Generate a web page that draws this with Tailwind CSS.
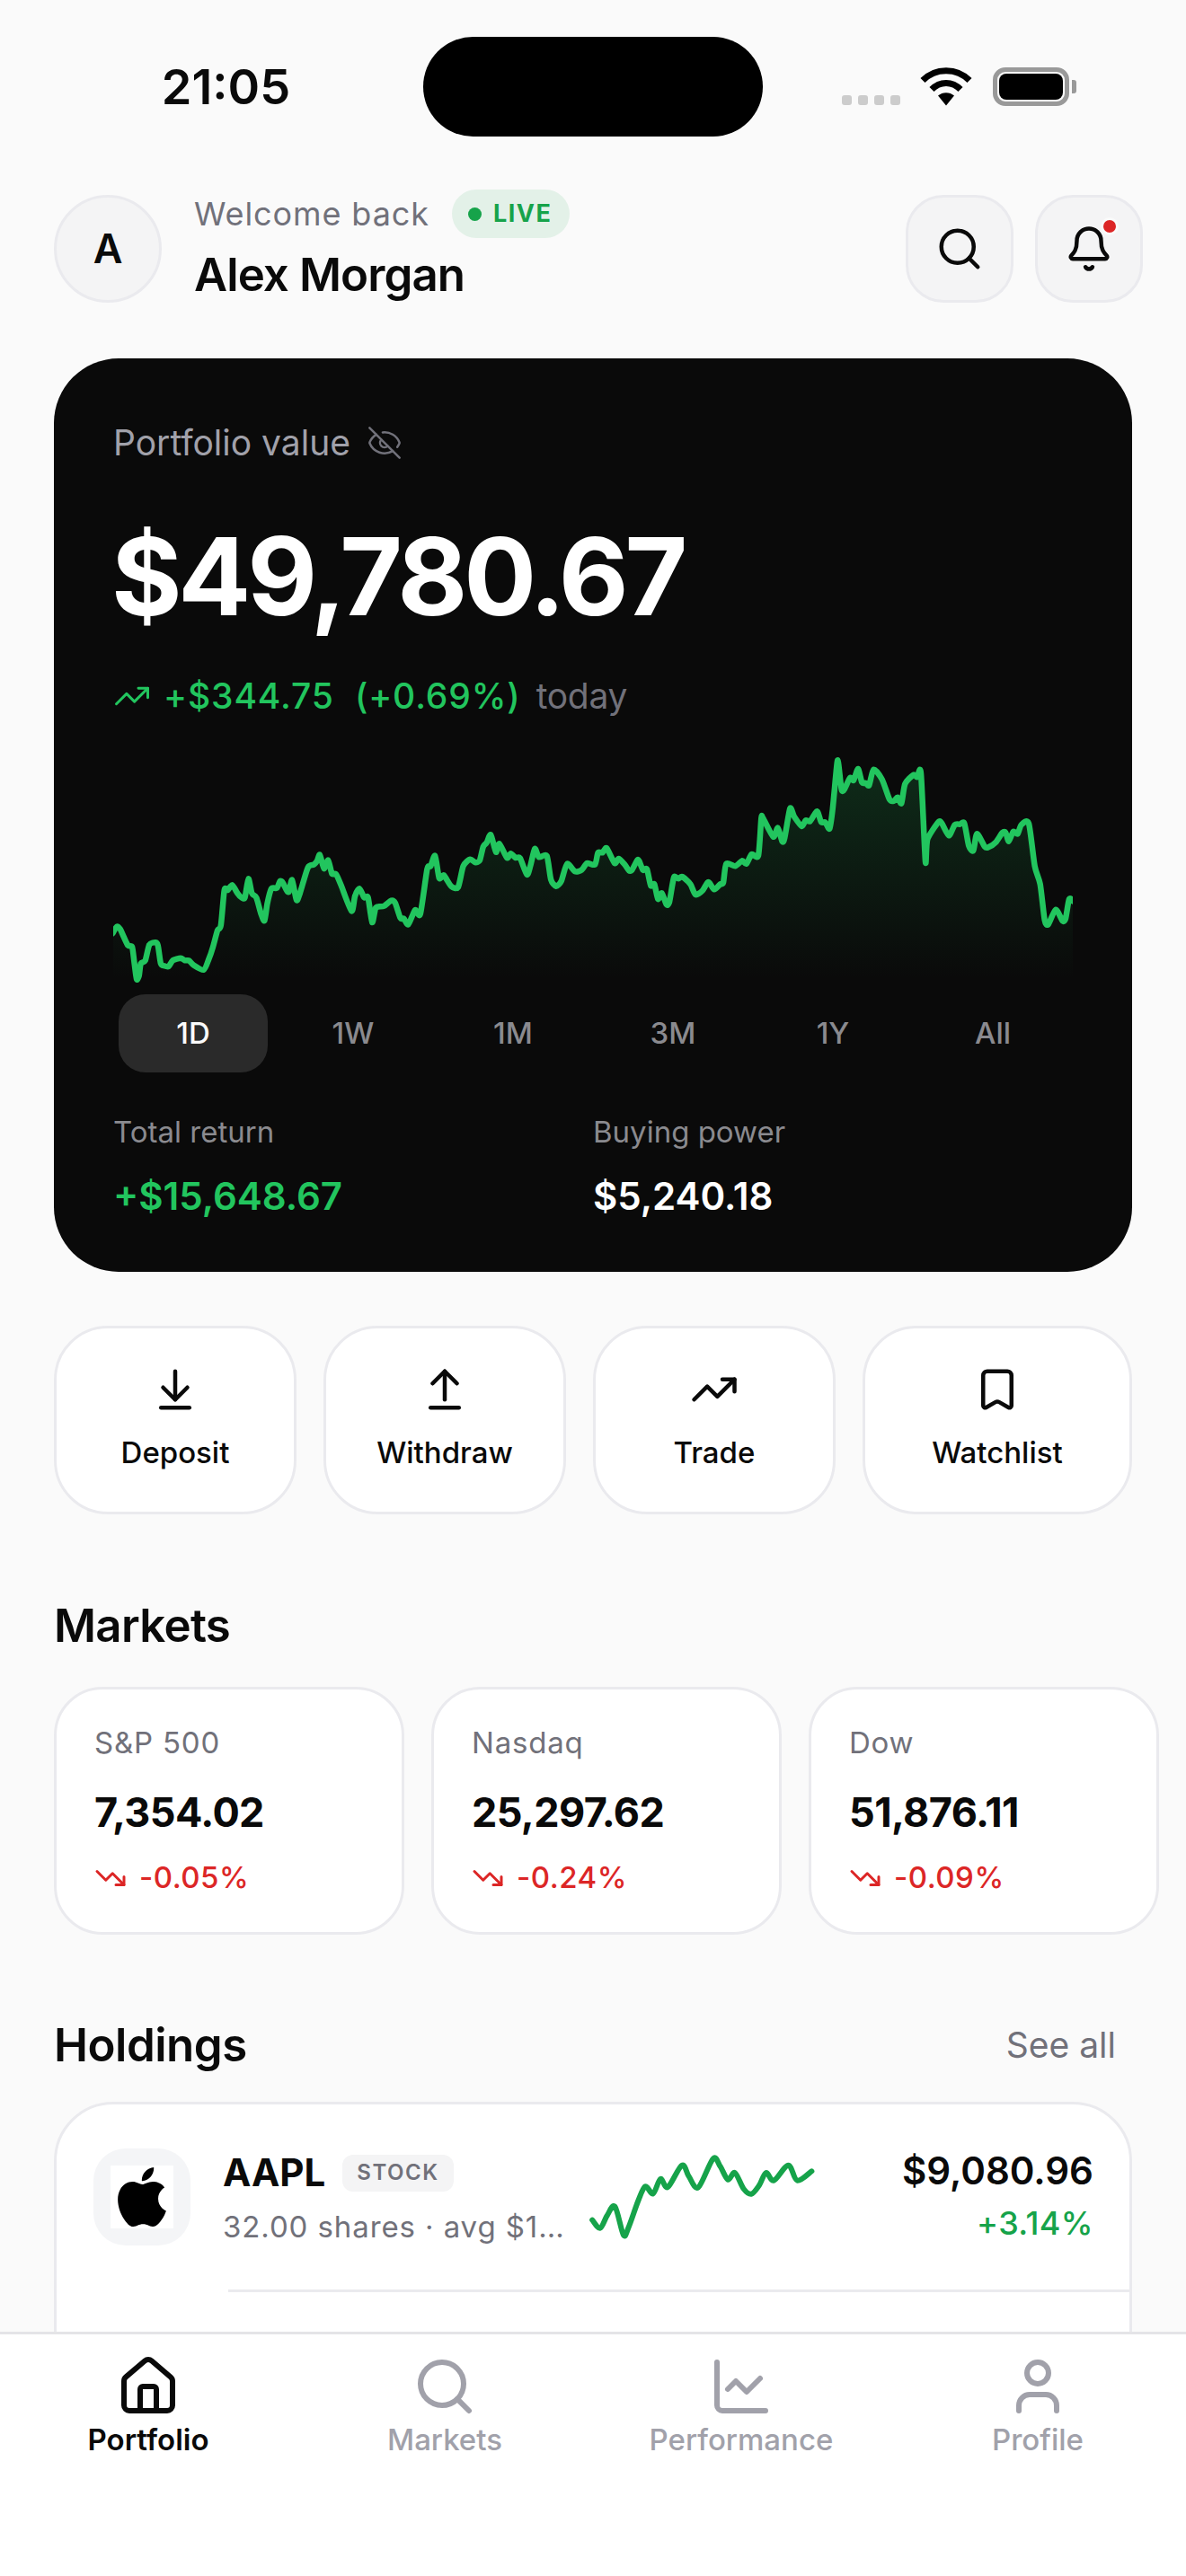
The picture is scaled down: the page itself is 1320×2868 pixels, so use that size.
<!DOCTYPE html>
<html lang="en">
<head>
    <meta charset="UTF-8">
    <meta name="viewport" content="width=device-width, initial-scale=1.0">
    <script src="https://cdn.jsdelivr.net/npm/@tailwindcss/browser@4"></script>
    <title>Portfolio</title>
</head>
<body class="w-[1320px] h-[2868px] overflow-hidden flex flex-col bg-[#fafafa] text-[#0a0a0a] font-[Inter,sans-serif]">

    <!-- Status bar -->
    <div class="shrink-0 flex h-[152px] pt-[41px]">
        <div class="w-[471px] flex justify-center pl-[32px] h-[111px] items-center">
            <span class="text-[54px] leading-[60px] font-semibold">21:05</span>
        </div>
        <div class="w-[378px] h-[111px] rounded-full bg-black"></div>
        <div class="flex h-[111px] pt-[34px] pl-[88px]">
            <div class="flex gap-[7px] pt-[31px]">
                <div class="w-[11px] h-[11px] rounded-[3px] bg-[#cccccc]"></div>
                <div class="w-[11px] h-[11px] rounded-[3px] bg-[#cccccc]"></div>
                <div class="w-[11px] h-[11px] rounded-[3px] bg-[#cccccc]"></div>
                <div class="w-[11px] h-[11px] rounded-[3px] bg-[#cccccc]"></div>
            </div>
            <svg class="ml-[22px]" width="58" height="43" viewBox="0 0 58 43" fill="none" stroke="#000" stroke-width="7">
                <path d="M3 14.500C17 0 41 0 55 14.500"/>
                <path d="M13 24.500C22 15 36 15 45 24.500"/>
                <path fill="#000" stroke="none" d="M20 31.500C25 27 33 27 38 31.500L29 42.500Z"/>
            </svg>
            <div class="ml-[23px] w-[85px] h-[43px] rounded-[14px] border-[5px] border-[#999999] p-[2px]">
                <div class="w-full h-full rounded-[8px] bg-black"></div>
            </div>
            <div class="ml-[3px] mt-[14px] w-[5px] h-[15px] rounded-r-[3px] bg-[#999999]"></div>
        </div>
    </div>

    <!-- Scrolling content -->
    <main class="flex-1 min-h-0 overflow-hidden">
        <header class="ml-[60px] w-[1212px] mt-[65px] h-[120px] flex items-center justify-between">
            <div class="flex items-center gap-[36px]">
                <div class="w-[120px] h-[120px] rounded-full border-[3px] border-[#eaeaee] bg-[#f4f4f5] flex items-center justify-center text-[45px] leading-[54px] font-semibold">A</div>
                <div>
                    <div class="flex items-center gap-[25px] h-[54px]">
                        <span class="text-[36px] leading-[54px] text-[#71717a] tracking-[0.9px]">Welcome back</span>
                        <span class="h-[54px] rounded-full bg-[#e3f1e8] flex items-center pl-[18px] pr-[20px] gap-[13px] text-[#16a34a] text-[27px] leading-[54px] font-bold tracking-[1.5px]">
                            <span class="w-[15px] h-[15px] rounded-full bg-[#16a34a]"></span>LIVE
                        </span>
                    </div>
                    <div class="mt-[4px] text-[51px] leading-[74px] font-semibold tracking-[-0.9px]">Alex Morgan</div>
                </div>
            </div>
            <div class="flex gap-[24px]">
                <div class="w-[120px] h-[120px] rounded-[42px] border-[3px] border-[#eaeaee] bg-[#f4f4f5] flex items-center justify-center">
                    <svg width="54" height="54" viewBox="0 0 24 24" fill="none" stroke="#0a0a0a" stroke-width="2" stroke-linecap="round" stroke-linejoin="round">
                        <path d="m21 21-4.340-4.340"/><circle cx="11" cy="11" r="8"/>
                    </svg>
                </div>
                <div class="relative w-[120px] h-[120px] rounded-[42px] border-[3px] border-[#eaeaee] bg-[#f4f4f5] flex items-center justify-center">
                    <svg width="54" height="54" viewBox="0 0 24 24" fill="none" stroke="#0a0a0a" stroke-width="2" stroke-linecap="round" stroke-linejoin="round">
                        <path d="M10.268 21a2 2 0 0 0 3.464 0"/>
                        <path d="M3.262 15.326A1 1 0 0 0 4 17h16a1 1 0 0 0 .740-1.673C19.410 13.956 18 12.499 18 8A6 6 0 0 0 6 8c0 4.499-1.411 5.956-2.738 7.326"/>
                    </svg>
                    <span class="absolute left-[70px] top-[22px] w-[20px] h-[20px] rounded-full bg-[#dc2626] border-[3px] border-[#fafafa]"></span>
                </div>
            </div>
        </header>

        <!-- Portfolio card -->
        <section class="ml-[60px] w-[1200px] mt-[62px] rounded-[72px] bg-[#0a0a0a] px-[66px] pt-[70px] pb-[54px]">
            <div class="flex items-center gap-[18px] h-[48px]">
                <span class="text-[39px] leading-[48px] text-[#a1a1aa]">Portfolio value</span>
                <svg width="40" height="40" viewBox="0 0 24 24" fill="none" stroke="#71717a" stroke-width="1.500" stroke-linecap="round" stroke-linejoin="round">
                    <path d="M10.733 5.076a10.744 10.744 0 0 1 11.205 6.575 1 1 0 0 1 0 .696 10.747 10.747 0 0 1-1.444 2.490"/>
                    <path d="M14.084 14.158a3 3 0 0 1-4.242-4.242"/>
                    <path d="M17.479 17.499a10.750 10.750 0 0 1-15.417-5.151 1 1 0 0 1 0-.696 10.750 10.750 0 0 1 4.446-5.143"/>
                    <path d="m2 2 20 20"/>
                </svg>
            </div>
            <div class="mt-[53px] -ml-[2px] text-[120px] leading-[144px] font-bold text-white tracking-[-4.2px]">$49,780.67</div>
            <div class="mt-[37px] flex items-center h-[48px]">
                <svg width="42" height="42" viewBox="0 0 24 24" fill="none" stroke="#22c55e" stroke-width="1.700" stroke-linecap="round" stroke-linejoin="round">
                    <path d="M16 7h6v6"/><path d="m22 7-8.500 8.500-5-5L2 17"/>
                </svg>
                <span class="ml-[14px] text-[39px] leading-[48px] font-medium text-[#22c55e] tracking-[0.9px]">+$344.75</span>
                <span class="ml-[23px] text-[39px] leading-[48px] font-medium text-[#22c55e] tracking-[0.9px]">(+0.69%)</span>
                <span class="ml-[17px] text-[39px] leading-[48px] text-[#71717a] tracking-[-0.3px]">today</span>
            </div>
            <svg id="chart" class="mt-[36px] block" width="1068" height="260" viewBox="126 834 1068 260" fill="none">
                <defs>
                    <linearGradient id="chartFill" gradientUnits="userSpaceOnUse" x1="0" y1="848" x2="0" y2="1090">
                        <stop offset="0" stop-color="#22c55e" stop-opacity="0.180"/>
                        <stop offset="1" stop-color="#22c55e" stop-opacity="0"/>
                    </linearGradient>
                </defs>
                <path id="chartArea" fill="url(#chartFill)"/>
                <path id="chartLine" stroke="#22c55e" stroke-width="6.500" stroke-linecap="round" stroke-linejoin="round"/>
            </svg>
            <div class="mt-[12px] px-[6px] grid grid-cols-6 gap-[12px]">
                <div class="h-[87px] rounded-[30px] bg-[#2a2a2a] flex items-center justify-center text-[33px] font-medium text-[#fafafa]">1D</div>
                <div class="h-[87px] flex items-center justify-center text-[33px] font-medium text-[#8a8a8f]">1W</div>
                <div class="h-[87px] flex items-center justify-center text-[33px] font-medium text-[#8a8a8f]">1M</div>
                <div class="h-[87px] flex items-center justify-center text-[33px] font-medium text-[#8a8a8f]">3M</div>
                <div class="h-[87px] flex items-center justify-center text-[33px] font-medium text-[#8a8a8f]">1Y</div>
                <div class="h-[87px] flex items-center justify-center text-[33px] font-medium text-[#8a8a8f]">All</div>
            </div>
            <div class="mt-[44px] grid grid-cols-2">
                <div>
                    <div class="text-[33px] leading-[44px] text-[#8a8a8f]">Total return</div>
                    <div class="mt-[20px] text-[42px] leading-[60px] font-semibold text-[#22c55e]">+$15,648.67</div>
                </div>
                <div>
                    <div class="text-[33px] leading-[44px] text-[#8a8a8f]">Buying power</div>
                    <div class="mt-[20px] text-[42px] leading-[60px] font-semibold text-white">$5,240.18</div>
                </div>
            </div>
        </section>

        <!-- Quick actions -->
        <section class="ml-[60px] w-[1200px] mt-[60px] flex gap-[30px]">
            <div class="w-[270px] h-[210px] rounded-[60px] border-[3px] border-[#eaeaee] bg-white flex flex-col items-center pt-[41px]">
                <svg width="54" height="54" viewBox="0 0 24 24" fill="none" stroke="#0a0a0a" stroke-width="2" stroke-linecap="round" stroke-linejoin="round">
                    <path d="M12 17V3"/><path d="m6 11 6 6 6-6"/><path d="M19 21H5"/>
                </svg>
                <span class="mt-[19px] text-[33px] leading-[48px] font-[550]">Deposit</span>
            </div>
            <div class="w-[270px] h-[210px] rounded-[60px] border-[3px] border-[#eaeaee] bg-white flex flex-col items-center pt-[41px]">
                <svg width="54" height="54" viewBox="0 0 24 24" fill="none" stroke="#0a0a0a" stroke-width="2" stroke-linecap="round" stroke-linejoin="round">
                    <path d="m18 9-6-6-6 6"/><path d="M12 3v14"/><path d="M5 21h14"/>
                </svg>
                <span class="mt-[19px] text-[33px] leading-[48px] font-[550]">Withdraw</span>
            </div>
            <div class="w-[270px] h-[210px] rounded-[60px] border-[3px] border-[#eaeaee] bg-white flex flex-col items-center pt-[41px]">
                <svg width="54" height="54" viewBox="0 0 24 24" fill="none" stroke="#0a0a0a" stroke-width="2" stroke-linecap="round" stroke-linejoin="round">
                    <path d="M16 7h6v6"/><path d="m22 7-8.500 8.500-5-5L2 17"/>
                </svg>
                <span class="mt-[19px] text-[33px] leading-[48px] font-[550]">Trade</span>
            </div>
            <div class="w-[300px] h-[210px] rounded-[60px] border-[3px] border-[#eaeaee] bg-white flex flex-col items-center pt-[41px]">
                <svg width="54" height="54" viewBox="0 0 24 24" fill="none" stroke="#0a0a0a" stroke-width="2" stroke-linecap="round" stroke-linejoin="round">
                    <path d="M17 3a2 2 0 0 1 2 2v15a1 1 0 0 1-1.496.868l-4.512-2.578a2 2 0 0 0-1.984 0l-4.512 2.578A1 1 0 0 1 5 20V5a2 2 0 0 1 2-2z"/>
                </svg>
                <span class="mt-[19px] text-[33px] leading-[48px] font-[550]">Watchlist</span>
            </div>
        </section>

        <!-- Markets -->
        <h2 class="ml-[60px] mt-[88px] text-[51px] leading-[72px] font-semibold tracking-[-0.7px]">Markets</h2>
        <section class="ml-[60px] mt-[32px] flex gap-[30px] w-[1260px] overflow-hidden">
            <div class="shrink-0 w-[390px] h-[276px] rounded-[54px] border-[3px] border-[#eaeaee] bg-white pl-[42px] pt-[35px]">
                <div class="text-[33px] leading-[48px] text-[#71717a] tracking-[0.8px]">S&amp;P 500</div>
                <div class="mt-[24px] text-[45px] leading-[60px] font-bold tracking-[-0.6px]">7,354.02</div>
                <div class="mt-[21px] flex items-center gap-[14px] h-[44px] text-[33px] font-medium text-[#dc2626]">
                    <svg width="36" height="36" viewBox="0 0 24 24" fill="none" stroke="#dc2626" stroke-width="2" stroke-linecap="round" stroke-linejoin="round">
                        <path d="M16 17h6v-6"/><path d="m22 17-8.500-8.500-5 5L2 7"/>
                    </svg>
                    <span class="tracking-[0.5px]">-0.05%</span>
                </div>
            </div>
            <div class="shrink-0 w-[390px] h-[276px] rounded-[54px] border-[3px] border-[#eaeaee] bg-white pl-[42px] pt-[35px]">
                <div class="text-[33px] leading-[48px] text-[#71717a] tracking-[0.8px]">Nasdaq</div>
                <div class="mt-[24px] text-[45px] leading-[60px] font-bold tracking-[-0.6px]">25,297.62</div>
                <div class="mt-[21px] flex items-center gap-[14px] h-[44px] text-[33px] font-medium text-[#dc2626]">
                    <svg width="36" height="36" viewBox="0 0 24 24" fill="none" stroke="#dc2626" stroke-width="2" stroke-linecap="round" stroke-linejoin="round">
                        <path d="M16 17h6v-6"/><path d="m22 17-8.500-8.500-5 5L2 7"/>
                    </svg>
                    <span class="tracking-[0.5px]">-0.24%</span>
                </div>
            </div>
            <div class="shrink-0 w-[390px] h-[276px] rounded-[54px] border-[3px] border-[#eaeaee] bg-white pl-[42px] pt-[35px]">
                <div class="text-[33px] leading-[48px] text-[#71717a] tracking-[0.8px]">Dow</div>
                <div class="mt-[24px] text-[45px] leading-[60px] font-bold tracking-[-0.6px]">51,876.11</div>
                <div class="mt-[21px] flex items-center gap-[14px] h-[44px] text-[33px] font-medium text-[#dc2626]">
                    <svg width="36" height="36" viewBox="0 0 24 24" fill="none" stroke="#dc2626" stroke-width="2" stroke-linecap="round" stroke-linejoin="round">
                        <path d="M16 17h6v-6"/><path d="m22 17-8.500-8.500-5 5L2 7"/>
                    </svg>
                    <span class="tracking-[0.5px]">-0.09%</span>
                </div>
            </div>
        </section>

        <!-- Holdings -->
        <div class="ml-[60px] w-[1182px] mt-[87px] flex items-center justify-between h-[72px]">
            <h2 class="text-[51px] leading-[72px] font-semibold tracking-[-0.5px]">Holdings</h2>
            <span class="text-[39px] leading-[48px] text-[#71717a]">See all</span>
        </div>
        <section class="ml-[60px] w-[1200px] mt-[27px] h-[400px] rounded-[66px] border-[3px] border-[#eaeaee] bg-white">
            <div class="flex items-center pl-[41px] pr-[40px] pt-[46px] pb-[46px]">
                <div class="shrink-0 w-[108px] h-[108px] rounded-[36px] bg-[#f4f5f7] flex items-center justify-center">
                    <div class="w-[70px] h-[70px] bg-white flex items-center justify-center">
                        <svg width="66" height="66" viewBox="0 0 24 24" fill="#000">
                            <path d="M12.152 6.896c-.948 0-2.415-1.078-3.960-1.040-2.040.027-3.910 1.183-4.961 3.014-2.117 3.675-.546 9.103 1.519 12.090 1.013 1.454 2.208 3.090 3.792 3.039 1.520-.065 2.090-.987 3.935-.987 1.831 0 2.350.987 3.960.948 1.637-.026 2.676-1.480 3.676-2.948 1.156-1.688 1.636-3.325 1.662-3.415-.039-.013-3.182-1.221-3.220-4.857-.026-3.040 2.480-4.494 2.597-4.559-1.429-2.090-3.623-2.324-4.390-2.376-2-.156-3.675 1.090-4.610 1.090zM15.530 3.830c.843-1.012 1.400-2.427 1.245-3.830-1.207.052-2.662.805-3.532 1.818-.780.896-1.454 2.338-1.273 3.714 1.338.104 2.715-.688 3.559-1.701"/>
                        </svg>
                    </div>
                </div>
                <div class="ml-[36px] w-[384px] shrink-0 pt-[5px]">
                    <div class="flex items-center gap-[19px] h-[50px]">
                        <span class="text-[42px] leading-[50px] font-bold">AAPL</span>
                        <span class="h-[41px] px-[16px] rounded-[12px] bg-[#f4f4f5] flex items-center text-[24px] font-semibold text-[#71717a] tracking-[1.5px]">STOCK</span>
                    </div>
                    <div class="mt-[11px] text-[33px] leading-[48px] text-[#71717a] tracking-[0.9px] truncate">32.00 shares · avg $182.40</div>
                </div>
                <svg id="spark" class="ml-[9px] shrink-0" width="280" height="108" viewBox="640 2392 280 108" fill="none">
                    <path id="sparkLine" stroke="#16a34a" stroke-width="6" stroke-linecap="round" stroke-linejoin="round"/>
                </svg>
                <div class="ml-auto text-right pb-[4px]">
                    <div class="text-[42px] leading-[54px] font-semibold">$9,080.96</div>
                    <div class="mt-[8px] text-[36px] leading-[46px] font-medium text-[#16a34a] tracking-[0.4px]">+3.14%</div>
                </div>
            </div>
            <div class="ml-[191px] h-[3px] bg-[#eaeaee]"></div>
        </section>
    </main>

    <!-- Bottom nav -->
    <nav class="shrink-0 h-[272px] border-t-[3px] border-[#e4e4e7] bg-white grid grid-cols-4 pt-[22px]">
        <div class="flex flex-col items-center text-[#0a0a0a]">
            <svg width="72" height="72" viewBox="0 0 24 24" fill="none" stroke="currentColor" stroke-width="2" stroke-linecap="round" stroke-linejoin="round">
                <path d="M15 21v-8a1 1 0 0 0-1-1h-4a1 1 0 0 0-1 1v8"/>
                <path d="M3 10a2 2 0 0 1 .709-1.528l7-5.999a2 2 0 0 1 2.582 0l7 5.999A2 2 0 0 1 21 10v9a2 2 0 0 1-2 2H5a2 2 0 0 1-2-2z"/>
            </svg>
            <span class="mt-[1px] text-[33px] leading-[44px] font-semibold">Portfolio</span>
        </div>
        <div class="flex flex-col items-center text-[#a1a1aa]">
            <svg width="72" height="72" viewBox="0 0 24 24" fill="none" stroke="currentColor" stroke-width="2" stroke-linecap="round" stroke-linejoin="round">
                <path d="m21 21-4.340-4.340"/><circle cx="11" cy="11" r="8"/>
            </svg>
            <span class="mt-[1px] text-[33px] leading-[44px] font-medium">Markets</span>
        </div>
        <div class="flex flex-col items-center text-[#a1a1aa]">
            <svg width="72" height="72" viewBox="0 0 24 24" fill="none" stroke="currentColor" stroke-width="2" stroke-linecap="round" stroke-linejoin="round">
                <path d="M3 3v16a2 2 0 0 0 2 2h16"/><path d="m19 9-5 5-4-4-3 3"/>
            </svg>
            <span class="mt-[1px] text-[33px] leading-[44px] font-medium">Performance</span>
        </div>
        <div class="flex flex-col items-center text-[#a1a1aa]">
            <svg width="72" height="72" viewBox="0 0 24 24" fill="none" stroke="currentColor" stroke-width="2" stroke-linecap="round" stroke-linejoin="round">
                <path d="M19 21v-2a4 4 0 0 0-4-4H9a4 4 0 0 0-4 4v2"/><circle cx="12" cy="7" r="4"/>
            </svg>
            <span class="mt-[1px] text-[33px] leading-[44px] font-medium">Profile</span>
        </div>
    </nav>

    <script>
        // chart samples, read off the design in two runs
        const runA = [40,655,52,632,62,640,72,665,85,695,97,700,103,750,110,808,117,795,122,755,135,745,147,692,165,685,172,695,180,755,190,763,203,765,215,745,238,737,250,745,262,745,275,760,305,776,320,740,332,700,345,645,355,628,365,510,375,510,388,493,403,520,415,535,425,535,435,472,445,520,458,535,472,590,482,612,490,555,502,505,518,503,527,480,535,485,547,512,553,515,562,476,575,543,585,520,608,435,625,425,635,412,643,392,655,438,667,410,678,455,690,457,705,495,735,580,745,530,758,505,772,535,783,535,795,618,805,570,815,565,830,563,850,545,862,553,877,603,887,605,900,625,920,577,935,590,955,440,965,430,978,395,990,470,1003,460,1025,497,1045,500,1060,430,1080,407,1095,418,1108,410,1118,365,1128,352,1140,325,1155,383,1165,355,1187,402,1198,388,1212,402,1225,403,1245,458,1255,430,1268,372,1280,400,1303,395,1315,475,1330,497,1345,480,1362,422,1385,448,1405,442,1420,420,1443,425,1452,385,1465,385,1477,370,1500,420,1512,405,1530,425];
        const runB = [0,445,10,443,28,410,35,415,47,443,60,440,73,495,85,490,97,540,110,520,125,558,135,550,150,468,165,472,178,465,205,490,222,525,245,512,262,485,270,487,285,508,305,490,315,485,325,422,355,430,378,412,392,422,410,390,432,395,442,270,448,270,482,332,497,302,512,348,520,335,538,237,552,265,577,297,590,277,605,280,628,247,642,283,655,283,670,305,680,240,695,85,700,90,710,175,720,172,738,135,750,143,765,105,778,150,790,152,802,160,817,107,845,140,870,207,885,212,897,200,910,220,922,155,950,125,962,133,975,120,990,415,997,340,1033,283,1045,287,1068,328,1088,292,1105,290,1120,287,1135,362,1150,378,1162,322,1188,365,1200,367,1225,350,1247,318,1258,318,1268,347,1283,315,1298,322,1310,292,1335,287,1355,430,1373,490,1388,610,1400,625,1425,575,1448,613,1458,605,1470,540,1485,548];
        const sparkRaw = [42,695,62,722,80,680,100,650,122,745,135,720,160,630,178,583,198,607,217,558,236,585,272,512,290,550,314,586,352,490,370,515,390,560,408,537,430,590,450,608,470,580,488,537,508,563,545,512,568,563,605,532];

        function toPoints(raw, x0, sx, y0, sy) {
            const pts = [];
            for (let i = 0; i < raw.length; i += 2) pts.push([x0 + raw[i] * sx, y0 + raw[i + 1] * sy]);
            return pts;
        }

        // catmull-rom through the samples so the joins look rounded
        function smoothPath(pts, k) {
            let d = `M${pts[0][0].toFixed(1)} ${pts[0][1].toFixed(1)}`;
            for (let i = 0; i < pts.length - 1; i++) {
                const p0 = pts[Math.max(i - 1, 0)], p1 = pts[i], p2 = pts[i + 1], p3 = pts[Math.min(i + 2, pts.length - 1)];
                const c1x = p1[0] + (p2[0] - p0[0]) * k, c1y = p1[1] + (p2[1] - p0[1]) * k;
                const c2x = p2[0] - (p3[0] - p1[0]) * k, c2y = p2[1] - (p3[1] - p1[1]) * k;
                d += `C${c1x.toFixed(1)} ${c1y.toFixed(1)} ${c2x.toFixed(1)} ${c2y.toFixed(1)} ${p2[0].toFixed(1)} ${p2[1].toFixed(1)}`;
            }
            return d;
        }

        const chartPts = toPoints(runA, 110, 600 / 1568, 820, 1 / 3).concat(toPoints(runB, 700, 1 / 3, 820, 1 / 3));
        const chartD = smoothPath(chartPts, 0.12);
        document.getElementById('chartLine').setAttribute('d', chartD);
        document.getElementById('chartArea').setAttribute('d', `${chartD}L${chartPts[chartPts.length - 1][0].toFixed(1)} 1094L${chartPts[0][0].toFixed(1)} 1094Z`);

        const sparkPts = toPoints(sparkRaw, 640, 680 / 1568, 2240, 1 / 3);
        document.getElementById('sparkLine').setAttribute('d', smoothPath(sparkPts, 0.16));
    </script>
</body>
</html>
